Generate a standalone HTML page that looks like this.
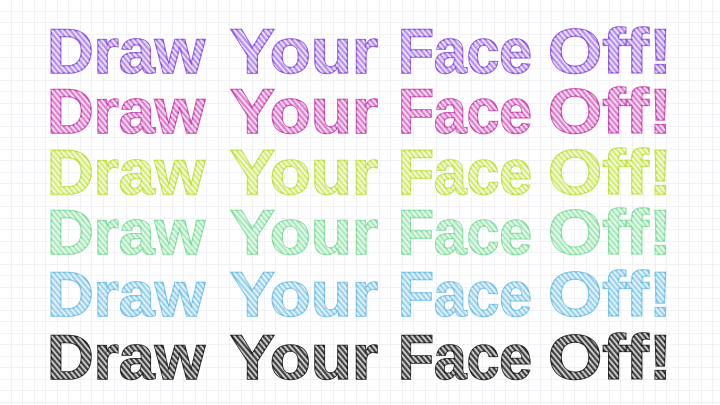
<!DOCTYPE html>
<html><head><meta charset="utf-8"><style>
html,body{margin:0;padding:0;background:#fff;}
svg{display:block}
text{font-family:"Liberation Sans",sans-serif;font-weight:bold;font-size:63px;}
</style></head><body>
<svg width="720" height="405" xmlns="http://www.w3.org/2000/svg">
<defs>
<pattern id="grid" width="11.5" height="11.5" patternUnits="userSpaceOnUse">
<path d="M11.5 0V11.5H0" fill="none" stroke="#e6e6ec" stroke-width="1"/>
</pattern>
<pattern id="h" width="4" height="4" patternUnits="userSpaceOnUse" patternTransform="rotate(50)">
<rect width="4" height="1.8" fill="#fff" fill-opacity="0.75"/>
</pattern>
<g id="row">
<text x="47" y="0" textLength="158" lengthAdjust="spacingAndGlyphs">Draw</text>
<text x="230" y="0" textLength="148" lengthAdjust="spacingAndGlyphs">Your</text>
<text x="398" y="0" textLength="134" lengthAdjust="spacingAndGlyphs">Face</text>
<text x="548" y="0" textLength="124" lengthAdjust="spacingAndGlyphs">Off!</text>
</g>
</defs>
<rect width="720" height="405" fill="url(#grid)"/>
<g fill="#b890f0" stroke="#8a55e0" stroke-width="1.5" transform="translate(0,73)"><use href="#row"/><use href="#row" fill="url(#h)" stroke="none"/></g>
<g fill="#e080cc" stroke="#c845b0" stroke-width="1.5" transform="translate(0,133)"><use href="#row"/><use href="#row" fill="url(#h)" stroke="none"/></g>
<g fill="#d4ec78" stroke="#bde040" stroke-width="1.5" transform="translate(0,194)"><use href="#row"/><use href="#row" fill="url(#h)" stroke="none"/></g>
<g fill="#a8eabb" stroke="#80dc9c" stroke-width="1.5" transform="translate(0,254)"><use href="#row"/><use href="#row" fill="url(#h)" stroke="none"/></g>
<g fill="#9cd2f0" stroke="#70bfe8" stroke-width="1.5" transform="translate(0,316)"><use href="#row"/><use href="#row" fill="url(#h)" stroke="none"/></g>
<g fill="#444" stroke="#222" stroke-width="1.5" transform="translate(0,379)"><use href="#row"/><use href="#row" fill="url(#h)" stroke="none"/></g>
</svg>
</body></html>
